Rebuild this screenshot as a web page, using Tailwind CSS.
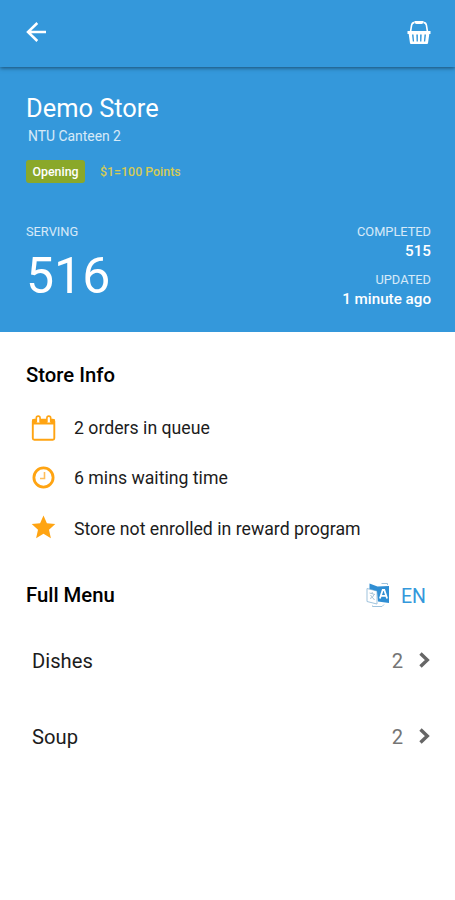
<!DOCTYPE html>
<html lang="en">

<head>
    <meta charset="UTF-8">
    <meta name="viewport" content="width=device-width, initial-scale=1.0">
    <title>Demo Store</title>
    <script src="https://cdn.jsdelivr.net/npm/@tailwindcss/browser@4"></script>
</head>

<body class="min-h-screen bg-white font-['Roboto',sans-serif] text-[#1c1c1c]">

    <!-- App bar -->
    <header class="relative flex h-[67px] items-center justify-between bg-[#3498db] pr-6 pb-[3px] pl-[26px] shadow-[0_1px_4px_rgba(0,0,0,0.5)]">
        <button aria-label="Back">
            <svg class="h-5 w-5" viewBox="0 0 20 20" fill="none" stroke="#fff" stroke-width="2.5">
                <path d="M20 10H2M11.300 1L2 10l9.300 9" />
            </svg>
        </button>
        <button aria-label="Basket">
            <svg class="h-6 w-6" viewBox="0 0 24 24" fill="none">
                <path d="M3.500 12L4.600 5.200Q5 2.800 7.500 2.400M20.500 12L19.400 5.200Q19 2.800 16.500 2.400" stroke="#fff" stroke-width="1.600" />
                <path d="M7.500 1.900h9" stroke="#fff" stroke-width="1.800" />
                <path d="M9.500 2.400h5" stroke="#fff" stroke-width="3" stroke-linecap="round" />
                <path fill="#fff" fill-rule="evenodd" d="M.5 11h23v3h-1.200l-1.300 9.200Q20.800 24 20 24H4q-.8 0-1-.8L1.700 14H.5zM5 14.500l.8 7h1.300l-.6-7zM9.300 14.500l.3 7h1.300v-7zM13.100 14.500v7h1.300l.3-7zM17.500 14.500l-.6 7h1.300l.8-7z" />
            </svg>
        </button>
    </header>

    <!-- Store summary -->
    <section class="h-[265px] bg-[#3498db] pt-[25px] pr-6 pl-[26px] text-white">
        <h1 class="text-[25.4px] leading-8">Demo Store</h1>
        <p class="mt-[2px] ml-[2px] text-[13.9px] leading-5 text-white/80">NTU Canteen 2</p>
        <div class="mt-[14px] flex items-center gap-[15px] text-[12.4px]">
            <span class="flex h-[23px] w-[59px] items-center justify-center rounded-[3px] bg-[#8aa82a] pt-[2px] font-medium">Opening</span>
            <span class="pt-[2px] font-medium text-[#d5cb55]">$1=100 Points</span>
        </div>
        <div class="mt-[41px] flex justify-between">
            <div>
                <p class="text-[12.8px] leading-4 text-white/80">SERVING</p>
                <p class="mt-2 text-[50px] leading-14">516</p>
            </div>
            <div class="text-right">
                <p class="text-[12.8px] leading-4 text-white/80">COMPLETED</p>
                <p class="mt-px text-[15.2px] leading-5 font-medium">515</p>
                <p class="mt-[11px] text-[12.8px] leading-4 text-white/80">UPDATED</p>
                <p class="mt-px text-[15.2px] leading-5 font-medium">1 minute ago</p>
            </div>
        </div>
    </section>

    <main class="pt-[29px] pr-6 pl-[26px]">
        <h2 class="text-[20.3px] leading-7 font-medium text-black">Store Info</h2>

        <ul class="mt-[13px] text-[17.7px]">
            <li class="flex h-[50.5px] items-center gap-[13px]">
                <svg class="h-[35px] w-[35px]" viewBox="0 0 35 35" fill="none">
                    <rect x="6.800" y="9.800" width="21.500" height="20" rx="1.500" stroke="#ffa412" stroke-width="1.900" />
                    <path d="M6 9.500h23v5H6z" fill="#ffa412" />
                    <path d="M10.300 12.500V8a1.900 1.900 0 0 1 3.800 0v4.500M20.900 12.500V8a1.900 1.900 0 0 1 3.800 0v4.500" fill="#fff" stroke="#ffa412" stroke-width="1.600" />
                </svg>
                <span class="pt-[2px]">2 orders in queue</span>
            </li>
            <li class="flex h-[50.5px] items-center gap-[13px]">
                <svg class="h-[35px] w-[35px]" viewBox="0 0 35 35" fill="none">
                    <circle cx="17.500" cy="17.500" r="9.600" stroke="#ffa412" stroke-width="2.800" />
                    <path d="M18.500 12v6.500h-4.500" stroke="#ffbe5c" stroke-width="1.600" />
                </svg>
                <span class="pt-[2px]">6 mins waiting time</span>
            </li>
            <li class="flex h-[50.5px] items-center gap-[13px]">
                <svg class="h-[35px] w-[35px]" viewBox="0 0 35 35">
                    <path fill="#ffa412" d="M17.500 4.500l3.400 7.800 8.400.8-6.300 5.700 1.900 8.400-7.400-4.400-7.400 4.400 1.900-8.400-6.300-5.700 8.400-.8z" />
                </svg>
                <span class="pt-[2px]">Store not enrolled in reward program</span>
            </li>
        </ul>

        <div class="mt-6 flex h-9 items-center justify-between">
            <h2 class="text-[20.3px] font-medium text-black">Full Menu</h2>
            <button class="flex items-center gap-[11px] pr-[5px] text-[19.5px] text-[#3498db]">
                <svg class="mb-[2px] h-[26px] w-6" viewBox="0 0 24 26" fill="none">
                    <path d="M1 6.500L11 9v13L1 19.500z" fill="#fff" stroke="#9fc3dd" stroke-width="1" />
                    <path d="M3.500 11l5.500 1.500M6.200 10v2M8 12.500q-1 3.500-4 4M4.500 13l4 5" stroke="#a9c4d6" stroke-width="1" />
                    <path d="M3.500 1.500l8 3L23 4v17l-11-1.500-1-10.500-7.500-2z" fill="#2f8ed3" />
                    <path d="M13.900 16.500l2.800-8.500h1.600l2.800 8.500M15 13.800h5" stroke="#fff" stroke-width="1.800" />
                    <path d="M15.500 1.500h6v1.500M6.500 23.500v1h9.500l2-2" stroke="#9fc3dd" stroke-width="1" />
                </svg>
                <span class="pt-[3px]">EN</span>
            </button>
        </div>

        <ul class="mt-[10px] pl-[6px] text-[20.2px]">
            <li class="flex h-[76px] items-center justify-between">
                <span>Dishes</span>
                <span class="flex items-center gap-4 text-[#757575]">2
                    <svg class="mb-[2px] h-4 w-3" viewBox="0 0 12 16" fill="none" stroke="#666" stroke-width="3.400">
                        <path d="M1.500 1.500L8.300 8 1.500 14.500" />
                    </svg>
                </span>
            </li>
            <li class="flex h-[76px] items-center justify-between">
                <span>Soup</span>
                <span class="flex items-center gap-4 text-[#757575]">2
                    <svg class="mb-[2px] h-4 w-3" viewBox="0 0 12 16" fill="none" stroke="#666" stroke-width="3.400">
                        <path d="M1.500 1.500L8.300 8 1.500 14.500" />
                    </svg>
                </span>
            </li>
        </ul>
    </main>

</body>

</html>
